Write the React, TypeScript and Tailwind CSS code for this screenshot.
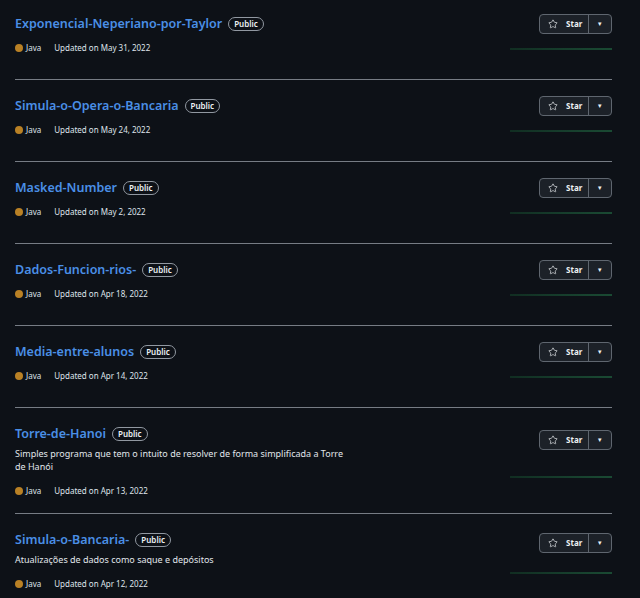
import { Star } from "lucide-react";

type Repo = {
  nome: string;
  descricao?: string;
  data: string;
};

const repos: Repo[] = [
  { nome: "Exponencial-Neperiano-por-Taylor", data: "May 31, 2022" },
  { nome: "Simula-o-Opera-o-Bancaria", data: "May 24, 2022" },
  { nome: "Masked-Number", data: "May 2, 2022" },
  { nome: "Dados-Funcion-rios-", data: "Apr 18, 2022" },
  { nome: "Media-entre-alunos", data: "Apr 14, 2022" },
  {
    nome: "Torre-de-Hanoi",
    descricao: "Simples programa que tem o intuito de resolver de forma simplificada a Torre de Hanói",
    data: "Apr 13, 2022",
  },
  {
    nome: "Simula-o-Bancaria-",
    descricao: "Atualizações de dados como saque e depósitos",
    data: "Apr 12, 2022",
  },
];

function RepoItem({ repo, primeiro }: { repo: Repo; primeiro: boolean }) {
  return (
    <li className={`flex justify-between border-b border-[#767c84] pb-[16px] ${primeiro ? "pt-[14px]" : "pt-[16px]"}`}>
      <div className="flex-1 min-h-[49px]">
        <div className="flex items-center h-[20px] gap-[6px]">
          <a className="text-[12.5px] font-semibold text-[#4a8fe6] leading-[20px]">{repo.nome}</a>
          <span className="h-[14px] px-[5px] rounded-full border border-[#9198a1] text-[8px] font-semibold text-[#eef1f4] flex items-center leading-none">
            Public
          </span>
        </div>
        {repo.descricao && (
          <p className="mt-[3px] w-[340px] text-[9px] leading-[13px] text-[#e1e6eb]">{repo.descricao}</p>
        )}
        <div className={`flex items-center h-[12px] text-[8px] text-[#dfe4ea] ${repo.descricao ? "mt-[12px]" : "mt-[8px]"}`}>
          <span className="w-[8px] h-[8px] rounded-full bg-[#b98125]"></span>
          <span className="ml-[3px]">Java</span>
          <span className="ml-[13px]">Updated on {repo.data}</span>
        </div>
      </div>
      <div className="w-[104px] flex flex-col justify-around items-end">
        <div className="flex h-[20px] w-[73px] rounded-[4px] border border-[#5f666f] bg-[#1c2128] text-[#eef1f4]">
          <button className="flex-1 flex items-center gap-[8px] pl-[8px] text-[8px] font-bold">
            <Star size={10} strokeWidth={1.6} />
            Star
          </button>
          <button className="w-[23px] border-l border-[#5f666f] flex items-center justify-center text-[7px]">
            ▾
          </button>
        </div>
        <div className="h-[29px] w-[102px] pt-[14px]">
          <div className="h-[2px] w-full bg-gradient-to-r from-[#112e22] via-[#163d2c] to-[#1a4a33]"></div>
        </div>
      </div>
    </li>
  );
}

export default function App() {
  return (
    <div className="min-h-[598px] bg-[#0d1117] font-['Noto_Sans','Liberation_Sans',sans-serif]">
      <ul className="ml-[15px] w-[597px]">
        {repos.map((repo, i) => (
          <RepoItem key={repo.nome} repo={repo} primeiro={i === 0} />
        ))}
      </ul>
    </div>
  );
}
